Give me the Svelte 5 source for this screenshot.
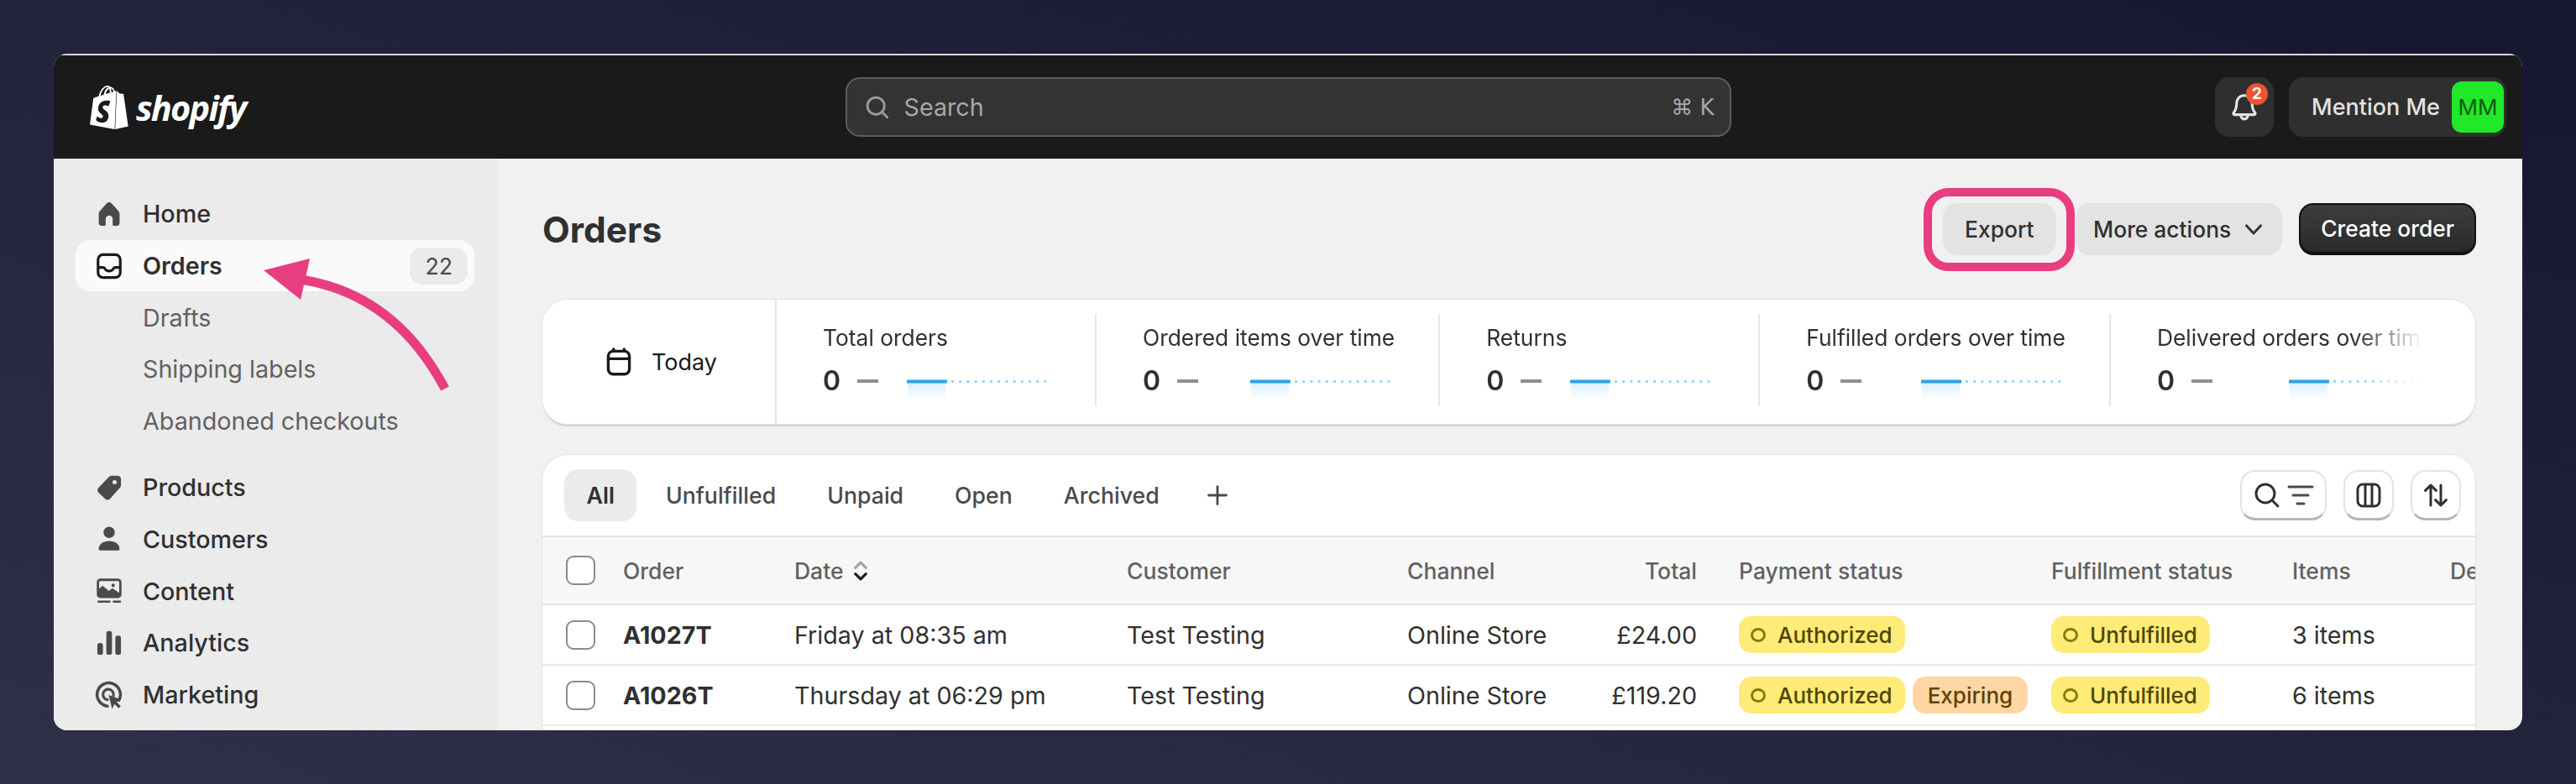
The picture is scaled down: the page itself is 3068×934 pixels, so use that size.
<script>
	const metrics = [
		{ label: 'Total orders' },
		{ label: 'Ordered items over time' },
		{ label: 'Returns' },
		{ label: 'Fulfilled orders over time' },
		{ label: 'Delivered orders over time' }
	];

	const tabs = ['All', 'Unfulfilled', 'Unpaid', 'Open', 'Archived'];

	const orders = [
		{ id: 'A1027T', date: 'Friday at 08:35 am', total: '£24.00', expiring: false, items: '3 items' },
		{ id: 'A1026T', date: 'Thursday at 06:29 pm', total: '£119.20', expiring: true, items: '6 items' }
	];
</script>

<div class="page">
	<div class="window">
		<header class="topbar">
			<div class="brand">
				<svg class="bag" viewBox="0 0 24 24" fill="#fff">
					<path d="M15.337 23.979l7.216-1.561s-2.604-17.613-2.625-17.73c-.018-.116-.114-.192-.211-.192s-1.929-.136-1.929-.136-1.275-1.274-1.439-1.411c-.045-.037-.075-.057-.121-.074l-.914 21.104h.023zM11.71 11.305s-.81-.424-1.774-.424c-1.447 0-1.504.906-1.504 1.141 0 1.232 3.24 1.715 3.24 4.629 0 2.295-1.44 3.76-3.406 3.76-2.354 0-3.54-1.465-3.54-1.465l.646-2.086s1.245 1.066 2.28 1.066c.675 0 .975-.545.975-.932 0-1.619-2.654-1.694-2.654-4.359-.034-2.237 1.571-4.416 4.827-4.416 1.257 0 1.875.361 1.875.361l-.945 2.715-.02.01zM11.17.83c.136 0 .271.038.405.135-.984.465-2.064 1.639-2.508 3.992-.656.213-1.293.405-1.889.578C7.697 3.75 8.951.84 11.17.84V.83zm1.235 2.949v.135c-.754.232-1.583.484-2.394.736.466-1.777 1.333-2.645 2.085-2.971.193.501.309 1.176.309 2.1zm.539-2.234c.694.074 1.141.867 1.429 1.755-.349.114-.735.231-1.158.366v-.252c0-.752-.096-1.371-.271-1.871v.002zm2.992 1.289c-.02 0-.06.021-.078.021s-.289.075-.714.21c-.423-1.233-1.176-2.37-2.508-2.37h-.115C12.135.209 11.669 0 11.265 0 8.159 0 6.675 3.877 6.21 5.846c-1.194.365-2.063.636-2.16.674-.675.213-.694.232-.772.87-.075.462-1.83 14.063-1.83 14.063L15.009 24l.927-21.166z" />
				</svg>
				<span class="wordmark">shopify</span>
			</div>
			<div class="search">
				<svg class="search-icon" viewBox="0 0 20 20" fill="none" stroke="#9a9a9a" stroke-width="1.6" stroke-linecap="round">
					<circle cx="9" cy="9" r="5.6" />
					<path d="M13.2 13.2 16.5 16.5" />
				</svg>
				<span>Search</span>
				<span class="shortcut">⌘ K</span>
			</div>
			<div class="top-actions">
				<div class="bell">
					<svg viewBox="0 0 20 20" fill="none" stroke="#e3e3e3" stroke-width="1.5" stroke-linejoin="round">
						<path d="M10 3.200c-2.700 0-4.400 2-4.400 4.500 0 3-.6 4-1.700 5.400-.3.400 0 1 .5 1h11.200c.5 0 .8-.6.5-1-1.100-1.400-1.700-2.400-1.700-5.400 0-2.500-1.700-4.500-4.400-4.500z" />
						<path d="M8 14.200c0 1.400.8 2.400 2 2.400s2-1 2-2.400" />
					</svg>
					<span class="bell-count">2</span>
				</div>
				<div class="account">
					<span>Mention Me</span>
					<span class="avatar">MM</span>
				</div>
			</div>
		</header>

		<div class="body">
			<nav class="sidebar">
				<a class="nav-row">
					<svg viewBox="0 0 20 20" fill="#4a4a4a"><path d="M10 3.300c-.6 0-1.100.3-1.500.7L5 8c-.6.6-.9 1.300-.9 2.100v4.900c0 1 .6 1.700 1.600 1.700h1.700c.4 0 .6-.3.6-.6v-3.300a2 2 0 1 1 4 0v3.300c0 .3.200.6.6.6h1.700c1 0 1.600-.7 1.600-1.700v-4.900c0-.8-.3-1.500-.9-2.100l-3.500-4c-.4-.4-.9-.7-1.500-.7z" /></svg>
					Home
				</a>
				<a class="nav-row active">
					<svg viewBox="0 0 20 20" fill="none" stroke="#1a1a1a" stroke-width="1.500" stroke-linecap="round">
						<rect x="3.700" y="3.500" width="12.600" height="13" rx="2.800" />
						<path d="M4 10.800h2.600c.6 0 .9.300 1.100.8.400.8 1.200 1.200 2.300 1.200s1.900-.4 2.300-1.200c.2-.5.5-.8 1.100-.8H16" />
					</svg>
					Orders
					<span class="count">22</span>
				</a>
				<a class="nav-row sub">Drafts</a>
				<a class="nav-row sub">Shipping labels</a>
				<a class="nav-row sub group-end">Abandoned checkouts</a>
				<a class="nav-row">
					<svg viewBox="0 0 20 20" fill="#4a4a4a">
						<path fill-rule="evenodd" d="M11.800 3.200h3c1.100 0 1.900.8 1.900 1.900v3.200c0 .8-.3 1.500-.9 2.100l-5.300 5.900c-.8.800-2 .8-2.800 0l-3.700-3.500c-.8-.8-.8-2 0-2.800l5.700-5.900c.6-.6 1.300-.9 2.100-.9zm1.300 2.500a1.200 1.200 0 1 0 0 2.400 1.200 1.200 0 0 0 0-2.400z" />
					</svg>
					Products
				</a>
				<a class="nav-row">
					<svg viewBox="0 0 20 20" fill="#4a4a4a">
						<circle cx="10" cy="6.300" r="3.200" />
						<path d="M4.100 15.700c0-2.800 2.600-4.500 5.900-4.500s5.900 1.700 5.900 4.500c0 .5-.3.800-.8.800H4.900c-.5 0-.8-.3-.8-.8z" />
					</svg>
					Customers
				</a>
				<a class="nav-row">
					<svg viewBox="0 0 20 20" fill="#4a4a4a">
						<path fill-rule="evenodd" d="M5 3h10c1.100 0 2 .9 2 2v7c0 1.100-.9 2-2 2H5c-1.100 0-2-.9-2-2V5c0-1.100.9-2 2-2zm0 1.400c-.4 0-.7.3-.7.7v3.700l2-1.800 3.500 3 2-1.500 3.900 2.600V5.100c0-.4-.3-.7-.7-.7H5zm7.300 1.400a1 1 0 1 0 0 2 1 1 0 0 0 0-2z" />
						<rect x="3.300" y="15.500" width="7.500" height="1.200" rx=".6" />
						<rect x="12" y="15.500" width="4.800" height="1.200" rx=".6" />
					</svg>
					Content
				</a>
				<a class="nav-row">
					<svg viewBox="0 0 20 20" fill="#4a4a4a">
						<rect x="3.300" y="10" width="3.200" height="6.700" rx="1.400" />
						<rect x="8.400" y="3.200" width="3.200" height="13.500" rx="1.400" />
						<rect x="13.500" y="5.800" width="3.200" height="10.900" rx="1.400" />
					</svg>
					Analytics
				</a>
				<a class="nav-row">
					<svg viewBox="0 0 20 20">
						<path d="M15.500 13A6.600 6.600 0 1 0 9 16.300" fill="none" stroke="#4a4a4a" stroke-width="1.700" stroke-linecap="round" />
						<path d="M12.400 10.500A3 3 0 1 0 9 12.700" fill="none" stroke="#4a4a4a" stroke-width="1.500" stroke-linecap="round" />
						<path d="M9.700 10 17 12.600l-2.800 1.300 2.400 2.400-1.200 1.200-2.400-2.400-1.300 2.900z" fill="#4a4a4a" />
					</svg>
					Marketing
				</a>
			</nav>

			<main class="main">
				<div class="page-header">
					<h1>Orders</h1>
					<div class="actions">
						<button class="btn export">Export<span class="highlight"></span></button>
						<button class="btn more">
							More actions
							<svg viewBox="0 0 20 20" fill="none" stroke="#303030" stroke-width="1.500" stroke-linecap="round" stroke-linejoin="round">
								<path d="M5.500 7.800 10 12.600 14.500 7.800" />
							</svg>
						</button>
						<button class="btn primary">Create order</button>
					</div>
				</div>

				<section class="stats">
					<div class="today">
						<svg viewBox="0 0 20 20" fill="none" stroke="#1a1a1a" stroke-width="1.600" stroke-linecap="round">
							<rect x="4" y="4" width="12" height="13" rx="2.800" />
							<path d="M4 8.300h12M7 2.800V4M13 2.800V4" />
						</svg>
						Today
					</div>
					<div class="metrics">
						{#each metrics as metric}
							<div class="metric">
								<div class="metric-label">{metric.label}</div>
								<div class="metric-value">
									<strong>0</strong>
									<span class="dash"></span>
									<svg class="spark" viewBox="0 0 172 26" fill="none">
										<defs>
											<linearGradient id="fade" x1="0" y1="0" x2="0" y2="1">
												<stop offset="0" stop-color="#d6eefc" />
												<stop offset="1" stop-color="#fff" />
											</linearGradient>
										</defs>
										<rect x="1" y="2" width="45" height="22" fill="url(#fade)" />
										<path d="M0 2.500H48" stroke="#2ea3e3" stroke-width="4" />
										<path d="M53 2.500H168" stroke="#9ad4f2" stroke-width="3" stroke-dasharray="3 6.200" />
									</svg>
								</div>
							</div>
						{/each}
					</div>
				</section>

				<section class="orders">
					<div class="toolbar">
						<div class="tabs">
							{#each tabs as tab, i}
								<span class="tab" class:selected={i === 0}>{tab}</span>
							{/each}
							<svg class="plus" viewBox="0 0 20 20" fill="none" stroke="#4a4a4a" stroke-width="1.500" stroke-linecap="round">
								<path d="M10 4.500v11M4.500 10h11" />
							</svg>
						</div>
						<div class="tools">
							<span class="tool wide">
								<svg viewBox="0 0 20 20" fill="none" stroke="#303030" stroke-width="1.500" stroke-linecap="round">
									<circle cx="9" cy="9" r="5.500" />
									<path d="M13 13l3.500 3.500" />
								</svg>
								<svg viewBox="0 0 20 20" fill="none" stroke="#4a4a4a" stroke-width="1.500" stroke-linecap="round">
									<path d="M3 5h14M5.500 10h9M8 15h4" />
								</svg>
							</span>
							<span class="tool">
								<svg viewBox="0 0 20 20" fill="none" stroke="#303030" stroke-width="1.500">
									<rect x="3.500" y="3.500" width="13" height="13" rx="3" />
									<path d="M8 3.500v13M12 3.500v13" />
								</svg>
							</span>
							<span class="tool">
								<svg viewBox="0 0 20 20" fill="none" stroke="#303030" stroke-width="1.500" stroke-linecap="round" stroke-linejoin="round">
									<path d="M7 16V4M3.800 7.200 7 4l3.200 3.200M13 4v12M9.800 12.800 13 16l3.200-3.200" />
								</svg>
							</span>
						</div>
					</div>

					<div class="row head">
						<span class="check"></span>
						<span>Order</span>
						<span class="date-head">
							Date
							<svg viewBox="0 0 20 20" fill="none" stroke-width="1.700" stroke-linecap="round" stroke-linejoin="round">
								<path d="M6.500 8 10 4.500 13.500 8" stroke="#a0a0a0" />
								<path d="M6.500 12 10 15.500 13.500 12" stroke="#1a1a1a" />
							</svg>
						</span>
						<span>Customer</span>
						<span>Channel</span>
						<span class="right">Total</span>
						<span class="pad">Payment status</span>
						<span>Fulfillment status</span>
						<span>Items</span>
						<span class="clip">Delivery status</span>
					</div>

					{#each orders as order}
						<div class="row">
							<span class="check"></span>
							<strong class="order-id">{order.id}</strong>
							<span>{order.date}</span>
							<span>Test Testing</span>
							<span>Online Store</span>
							<span class="right">{order.total}</span>
							<span class="pad badges">
								<span class="badge"><i></i>Authorized</span>
								{#if order.expiring}
									<span class="badge orange">Expiring</span>
								{/if}
							</span>
							<span class="badges"><span class="badge"><i></i>Unfulfilled</span></span>
							<span>{order.items}</span>
							<span></span>
						</div>
					{/each}
				</section>
			</main>
		</div>
	</div>

	<svg class="arrow" viewBox="0 0 3068 934" fill="none">
		<path d="M530 463Q470 350 358 333" stroke="#e83e80" stroke-width="11" />
		<path d="M314 322 369 308 358 357z" fill="#e83e80" />
	</svg>
</div>

<style>
	:global(body) {
		margin: 0;
	}

	.page {
		position: relative;
		box-sizing: border-box;
		width: 3068px;
		height: 934px;
		padding: 64px;
		background: linear-gradient(to bottom left, #16172f, #2f3047);
		font-family: Inter, 'Liberation Sans', sans-serif;
		font-size: 28.7px;
		color: #303030;
		overflow: hidden;
	}

	.window {
		display: flex;
		flex-direction: column;
		height: 806px;
		border-radius: 16px;
		overflow: hidden;
		background: #f1f1f1;
	}

	.topbar {
		box-sizing: border-box;
		display: grid;
		grid-template-columns: 1fr 1055px 1fr;
		align-items: center;
		flex: none;
		height: 125px;
		background: #1a1a1a;
		border-top: 2px solid #d8d8d8;
	}

	.brand {
		display: flex;
		align-items: center;
		gap: 6px;
		padding-left: 40px;
	}

	.bag {
		width: 52px;
		height: 52px;
	}

	.wordmark {
		font-family: 'Open Sans', sans-serif;
		font-size: 41.5px;
		font-weight: 700;
		font-style: italic;
		letter-spacing: -1.8px;
		color: #fff;
	}

	.search {
		box-sizing: border-box;
		display: flex;
		align-items: center;
		gap: 14px;
		height: 71px;
		padding: 0 18px;
		background: #333;
		border: 2px solid #5c5c5c;
		border-radius: 17px;
		color: #a8a8a8;
		font-weight: 400;
	}

	.search-icon {
		width: 36px;
		height: 36px;
	}

	.shortcut {
		margin-left: auto;
		font-family: 'DejaVu Sans', Inter, sans-serif;
		font-size: 26px;
	}

	.top-actions {
		display: flex;
		justify-content: flex-end;
		gap: 18px;
		padding-right: 19px;
	}

	.bell {
		position: relative;
		display: flex;
		align-items: center;
		justify-content: center;
		width: 70px;
		height: 71px;
		background: #2f2f2f;
		border-radius: 17px;
	}

	.bell svg {
		width: 42px;
		height: 42px;
	}

	.bell-count {
		position: absolute;
		top: 7px;
		right: 7px;
		width: 26px;
		height: 26px;
		border-radius: 50%;
		background: #ef5330;
		color: #fff;
		font-size: 19px;
		font-weight: 700;
		line-height: 26px;
		text-align: center;
	}

	.account {
		display: flex;
		align-items: center;
		justify-content: space-between;
		box-sizing: border-box;
		width: 259px;
		height: 71px;
		padding: 0 3px 0 27px;
		background: #2f2f2f;
		border-radius: 17px;
		color: #e3e3e3;
		font-size: 27px;
		font-weight: 450;
	}

	.avatar {
		display: flex;
		align-items: center;
		justify-content: center;
		width: 62px;
		height: 61px;
		background: #22e82a;
		border-radius: 12px;
		color: #0f5a12;
		font-size: 26px;
		font-weight: 400;
	}

	.body {
		display: flex;
		flex: 1;
		min-height: 0;
	}

	.sidebar {
		box-sizing: border-box;
		flex: none;
		width: 528px;
		padding: 35px 27px 0 26px;
		background: #ebebeb;
	}

	.nav-row {
		box-sizing: border-box;
		display: flex;
		align-items: center;
		gap: 19px;
		height: 61.7px;
		padding-left: 19px;
		border-radius: 18px;
		font-weight: 500;
	}

	.nav-row svg {
		flex: none;
		width: 42px;
		height: 42px;
	}

	.nav-row.active {
		background: #fafafa;
		font-weight: 600;
		color: #303030;
	}

	.nav-row.sub {
		padding-left: 80px;
		font-weight: 400;
		color: #616161;
	}

	.group-end {
		margin-bottom: 17.5px;
	}

	.count {
		margin-left: auto;
		margin-right: 8px;
		padding: 0 18px;
		line-height: 44px;
		background: #ebebeb;
		border-radius: 15px;
		font-size: 26.7px;
		font-weight: 400;
		color: #4a4a4a;
	}

	.main {
		flex: 1;
		min-width: 0;
		padding: 53px 56px 0 54px;
	}

	.page-header {
		display: flex;
		align-items: center;
		justify-content: space-between;
		height: 62px;
		margin-bottom: 53px;
	}

	h1 {
		margin: 0;
		font-size: 42.5px;
		font-weight: 650;
	}

	.actions {
		display: flex;
		gap: 20px;
		margin-right: -1px;
	}

	.btn {
		position: relative;
		display: flex;
		align-items: center;
		box-sizing: border-box;
		height: 62px;
		padding: 0 26.5px;
		border: 0;
		border-radius: 17px;
		background: #e3e3e3;
		font: 500 26.4px Inter, sans-serif;
		color: #303030;
	}

	.more {
		margin-left: 3px;
		padding: 0 15px 0 21px;
		gap: 8px;
	}

	.more svg {
		width: 38px;
		height: 38px;
	}

	.primary {
		padding: 0 24px;
		background: linear-gradient(#3d3d3d, #2a2a2a);
		border: 2px solid #111;
		border-bottom-width: 4px;
		color: #fff;
		font-weight: 500;
	}

	.highlight {
		position: absolute;
		top: -18px;
		right: -22px;
		bottom: -19px;
		left: -23px;
		border: 10px solid #e83e80;
		border-radius: 30px;
	}

	.stats {
		display: flex;
		box-sizing: border-box;
		height: 148px;
		margin-bottom: 37px;
		background: #fff;
		border-radius: 30px;
		box-shadow: 0 0 0 1px #e3e3e3, 0 3px 1px #d2d2d2;
		overflow: hidden;
	}

	.today {
		display: flex;
		flex: none;
		align-items: center;
		gap: 18px;
		box-sizing: border-box;
		width: 279px;
		padding-left: 70px;
		border-right: 2px solid #e6e6e6;
		font-size: 27px;
		color: #1a1a1a;
	}

	.today svg {
		width: 42px;
		height: 42px;
	}

	.metrics {
		display: flex;
		flex: 1;
		min-width: 0;
		margin-right: 63px;
		overflow: hidden;
		mask-image: linear-gradient(to left, transparent, #000 80px);
	}

	.metric {
		flex: none;
		box-sizing: content-box;
		min-width: 272px;
		margin: 17px 0 21px;
		padding: 12px 52px 0 55px;
		border-right: 2px solid #e6e6e6;
	}

	.metric:last-child {
		border-right: 0;
	}

	.metric-label {
		font-size: 26.4px;
		white-space: nowrap;
	}

	.metric-value {
		display: flex;
		align-items: flex-start;
		margin-top: 18px;
	}

	.metric-value strong {
		font-size: 32px;
		line-height: 36px;
		font-weight: 600;
	}

	.dash {
		width: 25px;
		height: 4px;
		margin: 16px 0 0 20px;
		background: #8e8e93;
	}

	.spark {
		width: 172px;
		height: 26px;
		margin: 16px 0 0 auto;
	}

	.orders {
		height: 340px;
		background: #fff;
		border-radius: 30px 30px 0 0;
		box-shadow: 0 0 0 1px #e3e3e3;
		overflow: hidden;
	}

	.toolbar {
		display: flex;
		align-items: center;
		justify-content: space-between;
		box-sizing: border-box;
		height: 98px;
		padding: 0 17px 0 26px;
		border-bottom: 2px solid #e3e3e3;
	}

	.tabs {
		display: flex;
		align-items: center;
		gap: 8px;
	}

	.tab {
		padding: 0 26.5px;
		line-height: 62px;
		border-radius: 17px;
		font-size: 26.7px;
		font-weight: 500;
		color: #4a4a4a;
	}

	.tab.selected {
		background: #ebebeb;
		color: #303030;
		font-weight: 600;
	}

	.plus {
		width: 38px;
		height: 38px;
		margin-left: 16px;
	}

	.tools {
		display: flex;
		gap: 20px;
	}

	.tool {
		display: flex;
		align-items: center;
		justify-content: center;
		box-sizing: border-box;
		width: 60px;
		height: 60px;
		background: #fff;
		border: 2px solid #e3e3e3;
		border-bottom: 3px solid #b5b5b5;
		border-radius: 18px;
	}

	.tool svg {
		width: 40px;
		height: 40px;
	}

	.tool.wide {
		width: 103px;
	}

	.row {
		display: grid;
		grid-template-columns: 68px 204px 396px 334px 230px 115px 422px 287px 188px 1fr;
		align-items: center;
		box-sizing: border-box;
		height: 72px;
		padding-left: 28px;
		border-bottom: 2px solid #e9e9e9;
		white-space: nowrap;
	}

	.row.head {
		height: 81px;
		background: #f7f7f7;
		border-bottom-color: #e3e3e3;
		font-size: 26.5px;
		font-weight: 500;
		color: #616161;
	}

	.check {
		box-sizing: border-box;
		width: 35px;
		height: 35px;
		background: #fff;
		border: 2px solid #8a8a8a;
		border-radius: 9px;
	}

	.date-head {
		display: flex;
		align-items: center;
		gap: 2px;
	}

	.date-head svg {
		width: 36px;
		height: 36px;
	}

	.order-id {
		font-weight: 650;
	}

	.right {
		text-align: right;
	}

	.pad {
		padding-left: 50px;
	}

	.clip {
		overflow: hidden;
	}

	.badges {
		display: flex;
		gap: 9px;
	}

	.badge {
		display: inline-flex;
		align-items: center;
		gap: 14px;
		height: 44px;
		padding: 0 15px 0 14px;
		background: #ffeb78;
		border-radius: 15px;
		font-size: 26px;
		font-weight: 450;
		color: #4f4700;
	}

	.badge i {
		box-sizing: border-box;
		width: 18px;
		height: 17px;
		border: 3px solid #8a7a00;
		border-radius: 50%;
	}

	.badge.orange {
		padding: 0 18px;
		background: #ffd6a4;
		color: #5e4200;
	}

	.arrow {
		position: absolute;
		top: 0;
		left: 0;
		width: 3068px;
		height: 934px;
		pointer-events: none;
	}
</style>
